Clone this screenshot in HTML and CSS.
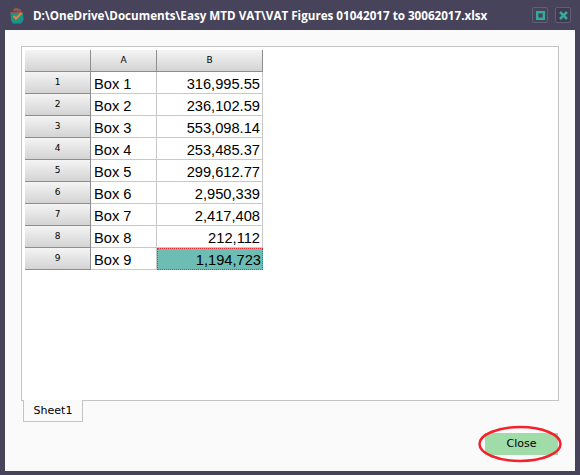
FILE: index.html
```html
<!DOCTYPE html>
<html lang="en">
<head>
<meta charset="utf-8">
<title>VAT Figures</title>
<link rel="stylesheet" href="styles.css">
</head>
<body>
<div class="window">
  <header class="titlebar">
    <svg class="app-icon" width="14" height="17" viewBox="0 0 14 17">
      <path d="M3 4 Q4 1 6 1 L8 2 Q11 2 11 5" fill="#8d5a50" stroke="#8d5a50" stroke-width="1"/>
      <path d="M0.5 5 L13 5 L13.5 13 L11 16.5 L3 16.5 L1 13 Z" fill="#1a9488"/>
      <path d="M0.5 5 L13 5 L13 6.5 L0.6 6.5 Z" fill="#8f5a55"/>
      <path d="M3.5 9 L6 11.5 L11.5 6" fill="none" stroke="#f08038" stroke-width="2"/>
    </svg>
    <span class="title">D:\OneDrive\Documents\Easy MTD VAT\VAT Figures 01042017 to 30062017.xlsx</span>
    <div class="win-btn">
      <svg width="9" height="9" viewBox="0 0 9 9"><rect x="1.2" y="1.2" width="6.6" height="6.6" fill="none" stroke="#36a9a0" stroke-width="2.4"/></svg>
    </div>
    <div class="win-btn win-btn-close">
      <svg width="9" height="9" viewBox="0 0 9 9"><path d="M1 1 L8 8 M8 1 L1 8" fill="none" stroke="#36a9a0" stroke-width="2.6"/></svg>
    </div>
  </header>
  <main class="content">
    <div class="sheet">
      <table class="grid">
        <thead>
          <tr><th class="corner"></th><th class="col-a">A</th><th class="col-b">B</th></tr>
        </thead>
        <tbody>
          <tr><th>1</th><td>Box 1</td><td class="num">316,995.55</td></tr>
          <tr><th>2</th><td>Box 2</td><td class="num">236,102.59</td></tr>
          <tr><th>3</th><td>Box 3</td><td class="num">553,098.14</td></tr>
          <tr><th>4</th><td>Box 4</td><td class="num">253,485.37</td></tr>
          <tr><th>5</th><td>Box 5</td><td class="num">299,612.77</td></tr>
          <tr><th>6</th><td>Box 6</td><td class="num">2,950,339</td></tr>
          <tr><th>7</th><td>Box 7</td><td class="num">2,417,408</td></tr>
          <tr><th>8</th><td>Box 8</td><td class="num">212,112</td></tr>
          <tr><th>9</th><td>Box 9</td><td class="num selected">1,194,723</td></tr>
        </tbody>
      </table>
    </div>
    <div class="tabs"><div class="tab">Sheet1</div></div>
    <div class="footer">
      <button class="close">Close</button>
      <svg class="ring" width="84" height="38" viewBox="0 0 84 38"><ellipse cx="42" cy="19" rx="40.5" ry="17" fill="none" stroke="#f5222d" stroke-width="2.5"/></svg>
    </div>
  </main>
</div>
</body>
</html>
```
FILE: styles.css
```css
html, body { margin: 0; padding: 0; }
body { width: 580px; height: 475px; overflow: hidden; background: #47435a; font-family: "Liberation Sans", Arial, sans-serif; }
.window { display: flex; flex-direction: column; height: 475px; }
.titlebar { display: flex; align-items: center; height: 30px; padding: 0 9px 0 10px; box-sizing: border-box; }
.app-icon { flex: none; margin-right: 9px; }
.title { flex: 1; color: #fff; font-family: "Open Sans", "Noto Sans", sans-serif; font-weight: 700; font-size: 11.65px; white-space: nowrap; overflow: hidden; }
.win-btn { width: 14px; height: 14px; margin-left: 7px; border: 1px solid #625e75; border-radius: 2px; display: flex; align-items: center; justify-content: center; }
.win-btn-close { background: #3f3c52; }
.content { margin: 0 5px 4px; height: 441px; background: #fafafa; padding: 16px 16px 0; box-sizing: border-box; display: flex; flex-direction: column; }
.sheet { height: 355px; box-sizing: border-box; border: 1px solid #c4c4c4; background: #fff; padding: 3px; }
.grid { border-collapse: separate; border-spacing: 0; table-layout: fixed; width: 238px; }
.grid th { font-size: 9px; font-weight: normal; color: #000; height: 21px; padding: 0 0 2px; box-sizing: border-box; background: linear-gradient(#f4f4f4, #d4d4d4); border-bottom: 1px solid #8e8e8e; border-right: 1px solid #8e8e8e; font-family: "DejaVu Sans", sans-serif; }
.grid tr { height: 22px; }
.corner { width: 66px; }
.col-a { width: 66px; }
.col-b { width: 106px; }
.grid td { height: 21px; padding: 2px 0 0 3px; box-sizing: border-box; font-size: 14.67px; line-height: 18px; color: #000; border-bottom: 1px solid #c8c8c8; border-right: 1px solid #c8c8c8; }
.grid td.num { text-align: right; padding: 2px 2px 0 0; }
.grid td.selected { background: #6dbdb5; border: 1px dotted #e0303a; padding: 1px 1px 0 0; }
.tabs { display: flex; padding-left: 2px; }
.tab { width: 58px; height: 21px; margin-top: -1px; border: 1px solid #c4c4c4; border-top: 0; background: #fafafa; font-size: 11px; color: #000; display: flex; align-items: center; justify-content: center; font-family: "DejaVu Sans", sans-serif; }
.footer { position: relative; display: flex; justify-content: flex-end; margin-top: 11px; }
.close { width: 73px; height: 22px; margin-right: 1px; border: 0; background: #a0dca8; font-family: "DejaVu Sans", sans-serif; font-size: 11px; color: #000; padding: 0 0 2px; }
.ring { position: absolute; right: -3px; top: -8px; }
```
